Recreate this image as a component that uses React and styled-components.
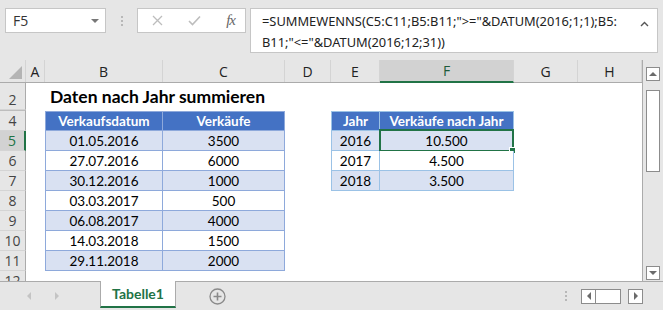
import React from "react";
import styled, { createGlobalStyle } from "styled-components";

const Global = createGlobalStyle`
  html, body { margin: 0; padding: 0; background: #e6e6e6; }
  #root { width: 663px; height: 310px; overflow: hidden; }
`;

const COLS = "26px 19px 118px 122px 46px 49px 134px 64px 64px";
const GREEN = "#217346";
const UI = `"Open Sans", "Noto Sans", sans-serif`;
const CELL = `Lato, "Noto Sans", sans-serif`;

const Window = styled.div`
  width: 663px;
  height: 310px;
  background: #e6e6e6;
  display: flex;
  flex-direction: column;
  font-family: ${UI};
  color: #222;
  overflow: hidden;
`;

const FormulaArea = styled.div`
  height: 60px;
  display: flex;
  align-items: flex-start;
  padding: 8px 5px 0 5px;
  box-sizing: border-box;
`;

const NameBox = styled.div`
  width: 101px;
  height: 25px;
  box-sizing: border-box;
  background: #fff;
  border: 1px solid #c6c6c6;
  display: flex;
  align-items: center;
  justify-content: space-between;
  padding: 0 6px 0 7px;
  font-size: 14px;
  color: #333;
`;

const DropArrow = styled.span`
  width: 0;
  height: 0;
  border-left: 4px solid transparent;
  border-right: 4px solid transparent;
  border-top: 4px solid #777;
`;

const Grip = styled.div`
  width: 31px;
  height: 25px;
  display: flex;
  flex-direction: column;
  align-items: center;
  justify-content: center;
  gap: 2px;
  & > i {
    width: 2px;
    height: 2px;
    background: #b8b8b8;
    display: block;
  }
`;

const FxBox = styled.div`
  width: 109px;
  height: 25px;
  box-sizing: border-box;
  background: #fff;
  border: 1px solid #c6c6c6;
  display: flex;
  align-items: center;
  justify-content: space-between;
  padding: 0 10px 0 14px;
`;

const FxText = styled.span`
  font-family: "Liberation Serif", serif;
  font-style: italic;
  font-size: 15px;
  color: #666;
  letter-spacing: -1px;
`;

const FormulaBox = styled.div`
  margin-left: 4px;
  width: 408px;
  height: 45px;
  box-sizing: border-box;
  background: #fff;
  border: 1px solid #c6c6c6;
  display: flex;
  justify-content: space-between;
  padding: 2px 8px 0 11px;
`;

const FormulaText = styled.div`
  font-family: "Noto Sans", sans-serif;
  font-size: 12.85px;
  line-height: 21px;
  color: #222;
  white-space: pre;
`;

const Caret = styled.span`
  font-size: 11px;
  color: #555;
  margin-top: 4px;
`;

const Main = styled.div`
  display: flex;
  height: 221px;
`;

const Sheet = styled.div`
  width: 642px;
  display: flex;
  flex-direction: column;
  border-right: 1px solid #ababab;
  box-sizing: content-box;
`;

const HeaderRow = styled.div`
  display: grid;
  grid-template-columns: ${COLS};
  height: 23px;
  border-bottom: 1px solid #ababab;
  box-sizing: border-box;
`;

const Corner = styled.div`
  position: relative;
  border-right: 1px solid #d4d4d4;
  & > svg {
    position: absolute;
    right: 3px;
    bottom: 3px;
  }
`;

const ColHead = styled.div`
  display: flex;
  align-items: center;
  justify-content: center;
  font-size: 14px;
  color: ${(p) => (p.$active ? "#1d5b3a" : "#222")};
  background: ${(p) => (p.$active ? "#d2d2d2" : "transparent")};
  border-right: 1px solid #d4d4d4;
  border-bottom: ${(p) => (p.$active ? `2px solid ${GREEN}` : "none")};
  box-sizing: border-box;
  margin-bottom: ${(p) => (p.$active ? "-1px" : "0")};
  height: ${(p) => (p.$active ? "23px" : "22px")};
`;

const Body = styled.div`
  flex: 1;
  overflow: hidden;
  display: flex;
  flex-direction: column;
`;

const Row = styled.div`
  display: grid;
  grid-template-columns: ${COLS};
  height: ${(p) => p.$h}px;
  flex: none;
`;

const RowHead = styled.div`
  display: flex;
  align-items: flex-end;
  justify-content: center;
  padding-bottom: 1px;
  box-sizing: border-box;
  font-size: 14px;
  line-height: 17px;
  color: ${(p) => (p.$active ? GREEN : "#444")};
  background: ${(p) => (p.$active ? "#d2d2d2" : "#e6e6e6")};
  border-right: ${(p) => (p.$active ? `2px solid ${GREEN}` : "1px solid #ababab")};
  border-bottom: 1px solid #d4d4d4;
`;

const HiddenRow = styled.div`
  height: 2px;
  display: grid;
  grid-template-columns: 26px 1fr;
  & > div:first-child {
    border-bottom: 1px solid #bdbdbd;
    border-right: 1px solid #ababab;
    background: #e6e6e6;
  }
  & > div:last-child {
    background: #fff;
  }
`;

const Cell = styled.div`
  background: #fff;
`;

const Title = styled.div`
  grid-column: 3 / span 4;
  background: #fff;
  display: flex;
  align-items: flex-end;
  padding: 0 0 3px 5px;
  font-family: ${CELL};
  font-weight: 700;
  font-size: 17.5px;
  color: #000;
  white-space: nowrap;
`;

const TCell = styled.div`
  position: relative;
  display: flex;
  align-items: center;
  justify-content: center;
  font-family: ${CELL};
  font-size: 13.5px;
  box-sizing: border-box;
  background: ${(p) => (p.$head ? "#4472c4" : p.$band ? "#d9e1f2" : "#fff")};
  color: ${(p) => (p.$head ? "#fff" : "#000")};
  font-weight: ${(p) => (p.$head ? 700 : 400)};
  border-right: 1px solid ${(p) => p.$line};
  border-bottom: 1px solid ${(p) => p.$line};
  border-left: ${(p) => (p.$first ? `1px solid ${p.$line}` : "none")};
  border-top: ${(p) => (p.$head ? `1px solid ${p.$line}` : "none")};
`;

const Selection = styled.div`
  position: absolute;
  left: -1px;
  top: -2px;
  right: -1px;
  bottom: -2px;
  border: 2px solid ${GREEN};
  pointer-events: none;
  &::after {
    content: "";
    position: absolute;
    right: -4px;
    bottom: -4px;
    width: 5px;
    height: 5px;
    background: ${GREEN};
    border: 1px solid #fff;
  }
`;

const VScroll = styled.div`
  width: 20px;
  display: flex;
  flex-direction: column;
  align-items: center;
  padding: 7px 0 1px 0;
  box-sizing: border-box;
`;

const SBtn = styled.div`
  width: 14px;
  height: 14px;
  box-sizing: border-box;
  border: 1px solid #8c8c8c;
  background: #fff;
  display: flex;
  align-items: center;
  justify-content: center;
  flex: none;
`;

const VThumb = styled.div`
  width: 14px;
  height: 82px;
  box-sizing: border-box;
  border: 1px solid #8c8c8c;
  background: #fff;
  margin-top: 9px;
`;

const Spacer = styled.div`
  flex: 1;
`;

const TabBar = styled.div`
  height: 29px;
  border-top: 1px solid #ababab;
  box-sizing: border-box;
  display: flex;
  align-items: stretch;
`;

const Nav = styled.div`
  width: 100px;
  display: flex;
  align-items: center;
  padding-left: 27px;
  gap: 24px;
  box-sizing: border-box;
`;

const Tab = styled.div`
  width: 76px;
  margin-top: -1px;
  height: 27px;
  box-sizing: border-box;
  background: #fff;
  border-left: 1px solid #ababab;
  border-right: 1px solid #ababab;
  border-bottom: 2px solid ${GREEN};
  display: flex;
  align-items: center;
  justify-content: center;
  font-family: ${CELL};
  font-weight: 700;
  font-size: 14px;
  color: ${GREEN};
`;

const AddSheet = styled.div`
  margin-left: 33px;
  display: flex;
  align-items: center;
`;

const HScroll = styled.div`
  margin-left: auto;
  margin-right: 20px;
  display: flex;
  align-items: center;
  gap: 0;
`;

const HDots = styled.div`
  display: flex;
  flex-direction: column;
  gap: 2px;
  margin-right: 14px;
  & > i {
    width: 2px;
    height: 2px;
    background: #b8b8b8;
    display: block;
  }
`;

const HTrack = styled.div`
  display: flex;
  align-items: center;
  background: #d6d6d6;
  height: 15px;
`;

const HThumb = styled.div`
  width: 25px;
  height: 15px;
  box-sizing: border-box;
  border: 1px solid #8c8c8c;
  border-left: none;
  background: #fff;
`;

const HGap = styled.div`
  width: 7px;
  height: 15px;
  background: #e6e6e6;
`;

const HBtn = styled(SBtn)`
  width: 15px;
  height: 15px;
`;

const Tri = ({ dir, color = "#6b6b6b", s = 4 }) => {
  const pts = {
    up: `0,${s} ${s},0 ${2 * s},${s}`,
    down: `0,0 ${2 * s},0 ${s},${s}`,
    left: `${s},0 ${s},${2 * s} 0,${s}`,
    right: `0,0 0,${2 * s} ${s},${s}`,
  }[dir];
  const w = dir === "up" || dir === "down" ? 2 * s : s;
  const h = dir === "up" || dir === "down" ? s : 2 * s;
  return (
    <svg width={w} height={h} viewBox={`0 0 ${w} ${h}`}>
      <polygon points={pts} fill={color} />
    </svg>
  );
};

const t1 = [
  ["01.05.2016", "3500"],
  ["27.07.2016", "6000"],
  ["30.12.2016", "1000"],
  ["03.03.2017", "500"],
  ["06.08.2017", "4000"],
  ["14.03.2018", "1500"],
  ["29.11.2018", "2000"],
];
const t2 = [
  ["2016", "10.500"],
  ["2017", "4.500"],
  ["2018", "3.500"],
];

const L1 = "#8ea9db";
const L2 = "#9bc2e6";

const Blank = ({ n }) =>
  Array.from({ length: n }).map((_, i) => <Cell key={"b" + i} />);

export default function App() {
  const rows = [];
  rows.push(
    <Row $h={20} key="r4">
      <RowHead>4</RowHead>
      <Cell />
      <TCell $head $first $line={L1}>Verkaufsdatum</TCell>
      <TCell $head $line={L1}>Verkäufe</TCell>
      <Cell />
      <TCell $head $first $line={L2}>Jahr</TCell>
      <TCell $head $line={L2}>Verkäufe nach Jahr</TCell>
      <Blank n={2} />
    </Row>
  );
  t1.forEach((r, i) => {
    const n = i + 5;
    const band = i % 2 === 0;
    const s = t2[i];
    rows.push(
      <Row $h={20} key={"r" + n}>
        <RowHead $active={n === 5}>{n}</RowHead>
        <Cell />
        <TCell $band={band} $first $line={L1}>{r[0]}</TCell>
        <TCell $band={band} $line={L1}>{r[1]}</TCell>
        <Cell />
        {s ? (
          <>
            <TCell $band={band} $first $line={L2}>{s[0]}</TCell>
            <TCell $band={band} $line={L2}>
              {s[1]}
              {n === 5 && <Selection />}
            </TCell>
          </>
        ) : (
          <Blank n={2} />
        )}
        <Blank n={2} />
      </Row>
    );
  });

  return (
    <Window>
      <Global />
      <FormulaArea>
        <NameBox>
          F5
          <DropArrow />
        </NameBox>
        <Grip>
          <i />
          <i />
          <i />
        </Grip>
        <FxBox>
          <svg width="11" height="11" viewBox="0 0 11 11">
            <path d="M1 1 L10 10 M10 1 L1 10" stroke="#bdbdbd" strokeWidth="1.3" />
          </svg>
          <svg width="13" height="11" viewBox="0 0 13 11">
            <path d="M1 6 L4.5 9.5 L12 1.5" stroke="#bdbdbd" strokeWidth="1.6" fill="none" />
          </svg>
          <FxText>fx</FxText>
        </FxBox>
        <FormulaBox>
          <FormulaText>
            {'=SUMMEWENNS(C5:C11;B5:B11;">="&DATUM(2016;1;1);B5:\nB11;"<="&DATUM(2016;12;31))'}
          </FormulaText>
          <Caret>
            <svg width="9" height="6" viewBox="0 0 9 6">
              <path d="M1 5 L4.5 1.5 L8 5" stroke="#555" strokeWidth="1.4" fill="none" />
            </svg>
          </Caret>
        </FormulaBox>
      </FormulaArea>
      <Main>
        <Sheet>
          <HeaderRow>
            <Corner>
              <svg width="13" height="13" viewBox="0 0 13 13">
                <polygon points="13,0 13,13 0,13" fill="#b4b4b4" />
              </svg>
            </Corner>
            {["A", "B", "C", "D", "E", "F", "G", "H"].map((c) => (
              <ColHead key={c} $active={c === "F"}>
                {c}
              </ColHead>
            ))}
          </HeaderRow>
          <Body>
            <Row $h={27}>
              <RowHead>2</RowHead>
              <Cell />
              <Title>Daten nach Jahr summieren</Title>
              <Blank n={3} />
            </Row>
            <HiddenRow>
              <div />
              <div />
            </HiddenRow>
            {rows}
            <Row $h={20}>
              <RowHead>12</RowHead>
              <Blank n={8} />
            </Row>
          </Body>
        </Sheet>
        <VScroll>
          <SBtn>
            <Tri dir="up" />
          </SBtn>
          <VThumb />
          <Spacer />
          <SBtn>
            <Tri dir="down" />
          </SBtn>
        </VScroll>
      </Main>
      <TabBar>
        <Nav>
          <Tri dir="left" color="#c4c4c4" s={4} />
          <Tri dir="right" color="#c4c4c4" s={4} />
        </Nav>
        <Tab>Tabelle1</Tab>
        <AddSheet>
          <svg width="17" height="17" viewBox="0 0 17 17">
            <circle cx="8.5" cy="8.5" r="7.5" fill="none" stroke="#8a8a8a" strokeWidth="1.3" />
            <path d="M8.5 4.5 V12.5 M4.5 8.5 H12.5" stroke="#8a8a8a" strokeWidth="1.6" />
          </svg>
        </AddSheet>
        <HScroll>
          <HDots>
            <i />
            <i />
            <i />
          </HDots>
          <HTrack>
            <HBtn>
              <Tri dir="left" />
            </HBtn>
            <HThumb />
            <HGap />
            <HBtn>
              <Tri dir="right" />
            </HBtn>
          </HTrack>
        </HScroll>
      </TabBar>
    </Window>
  );
}
